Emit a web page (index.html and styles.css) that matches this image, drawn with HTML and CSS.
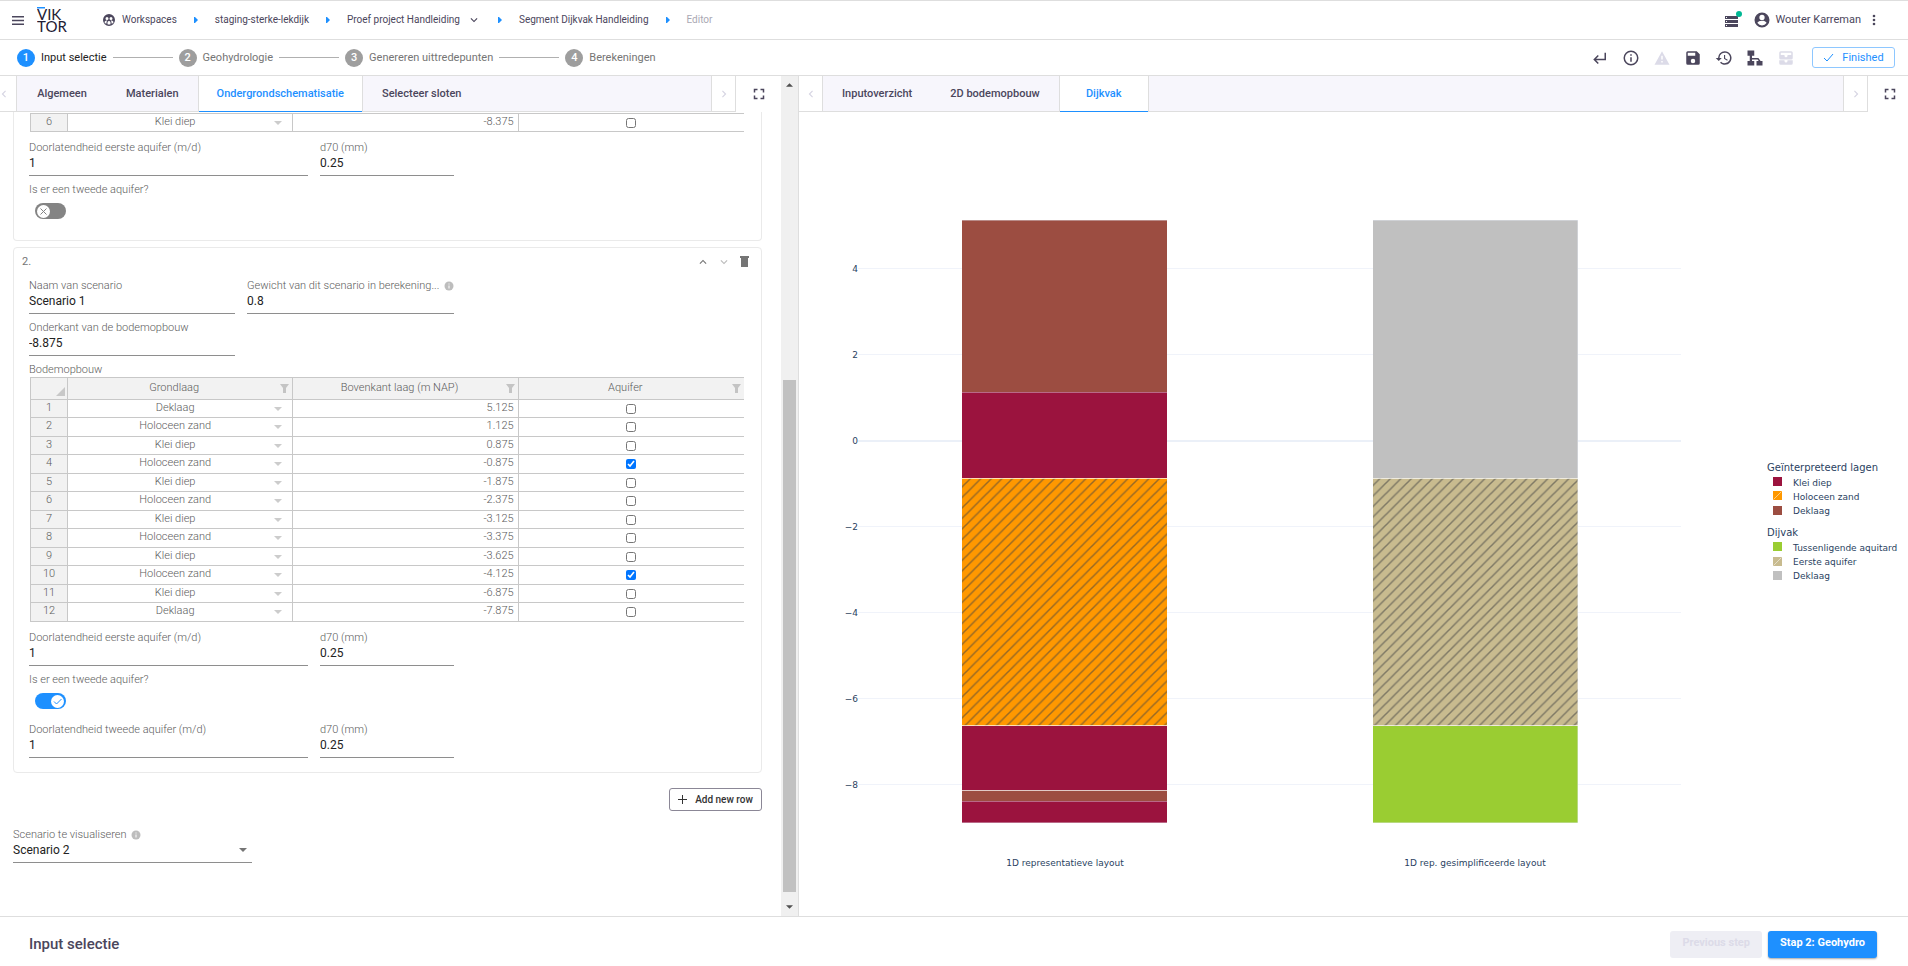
FILE: index.html
```html
<!DOCTYPE html>
<html lang="nl">
<head>
<meta charset="utf-8">
<title>Segment Dijkvak Handleiding - Editor</title>
<link rel="stylesheet" href="styles.css">
</head>
<body>
<svg class="sprite" aria-hidden="true">
  <symbol id="i-caret" viewBox="0 0 8 4"><path d="M0 0h8L4 4z"/></symbol>
  <symbol id="i-filter" viewBox="0 0 9 9"><path d="M0 0h9L6 4v5H3V4z"/></symbol>
  <symbol id="i-info-solid" viewBox="0 0 10 10"><circle cx="5" cy="5" r="4.500"/><path d="M4.500 2.500h1v1h-1zM4.500 4.500h1v3h-1z" fill="#fff"/></symbol>
  <symbol id="i-full" viewBox="0 0 24 24"><path d="M5 5h5v2H7v3H5zm9 0h5v5h-2V7h-3zm3 9h2v5h-5v-2h3zm-7 3v2H5v-5h2v3z"/></symbol>
  <symbol id="i-left" viewBox="0 0 24 24"><path d="M15.4 16.6 10.8 12l4.6-4.6L14 6l-6 6 6 6z"/></symbol>
  <symbol id="i-right" viewBox="0 0 24 24"><path d="M8.6 16.6l4.6-4.6-4.6-4.6L10 6l6 6-6 6z"/></symbol>
  <symbol id="i-down" viewBox="0 0 24 24"><path d="M7.4 8.6 12 13.2l4.6-4.6L18 10l-6 6-6-6z"/></symbol>
  <symbol id="i-up" viewBox="0 0 24 24"><path d="M7.4 15.4 12 10.8l4.6 4.6L18 14l-6-6-6 6z"/></symbol>
  <symbol id="i-step" viewBox="0 0 4 6"><path d="M0 0h1l3 3-3 3H0z"/></symbol>
</svg>

<header class="topbar">
  <button class="icon-btn menu" aria-label="Menu"><svg width="12" height="9" viewBox="0 0 12 9"><path d="M0 0h12v1.500H0zM0 3.800h12v1.500H0zM0 7.500h12V9H0z"/></svg></button>
  <a class="logo" href="#" aria-label="VIKTOR"><svg width="32" height="32" viewBox="0 -3 32 32"><path d="M0 0h8v1.500H0z" fill="#1e90ff"/><text y="13">VIK<tspan x="0" y="25">TOR</tspan></text></svg></a>
  <nav class="crumbs">
    <a href="#"><svg width="12" height="12" viewBox="0 0 24 24"><path fill-rule="evenodd" d="M12 0a12 12 0 1 0 0 24 12 12 0 0 0 0-24zM8 6a3 3 0 1 1 0 6 3 3 0 0 1 0-6zm8 0a3 3 0 1 1 0 6 3 3 0 0 1 0-6zM3 17c0-3 3-4 5-4l1 .2C8 14 7 15 7 17v2c-2 0-3-1-4-2zm9 4c-1 0-2 0-3-.5V17c0-2 2-3 3-3s3 1 3 3v3.500c-1 .5-2 .5-3 .5zm5-2v-2c0-2-1-3-2-3.800l1-.2c2 0 5 1 5 4-1 1-2 2-4 2z"/></svg>Workspaces</a>
    <svg class="sep" width="4" height="6"><use href="#i-step"/></svg>
    <a href="#">staging-sterke-lekdijk</a>
    <svg class="sep" width="4" height="6"><use href="#i-step"/></svg>
    <a href="#">Proef project Handleiding<svg class="drop" width="14" height="14"><use href="#i-down"/></svg></a>
    <svg class="sep" width="4" height="6"><use href="#i-step"/></svg>
    <a href="#">Segment Dijkvak Handleiding</a>
    <svg class="sep" width="4" height="6"><use href="#i-step"/></svg>
    <span class="current">Editor</span>
  </nav>
  <div class="user">
    <button class="icon-btn" aria-label="Jobs"><svg width="18" height="18" viewBox="0 0 18 18"><path d="M1 5h13v3H1zM1 9h13v3H1zM1 13h13v3H1z"/><path d="M2 6h1v1H2zM2 10h1v1H2zM2 14h1v1H2z" fill="#fff"/><circle cx="15" cy="3" r="3" fill="#00b894"/></svg></button>
    <button class="account"><svg width="18" height="18" viewBox="0 0 24 24"><path d="M12 2a10 10 0 1 0 0 20 10 10 0 0 0 0-20zm0 3a3.500 3.500 0 1 1 0 7 3.500 3.500 0 0 1 0-7zm0 14.200a7.200 7.200 0 0 1-6-3.200c0-2 4-3.100 6-3.100s6 1.100 6 3.100a7.200 7.200 0 0 1-6 3.200z" fill-rule="evenodd"/></svg>Wouter Karreman</button>
    <button class="icon-btn" aria-label="Meer"><svg width="4" height="12" viewBox="0 0 4 12"><circle cx="2" cy="2" r="1.300"/><circle cx="2" cy="6" r="1.300"/><circle cx="2" cy="10" r="1.300"/></svg></button>
  </div>
</header>

<div class="stepbar">
  <ol class="steps">
    <li class="active"><b>1</b><span>Input selectie</span></li>
    <li><b>2</b><span>Geohydrologie</span></li>
    <li><b>3</b><span>Genereren uittredepunten</span></li>
    <li><b>4</b><span>Berekeningen</span></li>
  </ol>
  <div class="tools">
    <button class="icon-btn" aria-label="Terug"><svg width="18" height="18" viewBox="0 0 24 24"><path d="M18 5v8H6.800l3.600-3.600L9 8l-6 6 6 6 1.400-1.400L6.800 15H20V5z"/></svg></button>
    <button class="icon-btn" aria-label="Informatie"><svg width="18" height="18" viewBox="0 0 24 24"><path d="M11 9h2V7h-2m1 13a8 8 0 1 1 0-16 8 8 0 0 1 0 16m0-18a10 10 0 1 0 0 20 10 10 0 0 0 0-20m-1 15h2v-6h-2z"/></svg></button>
    <button class="icon-btn" disabled aria-label="Waarschuwingen"><svg width="18" height="18" viewBox="0 0 24 24"><path d="M13 14h-2V9h2m0 9h-2v-2h2M2 21h20L12 3z"/></svg></button>
    <button class="icon-btn" aria-label="Opslaan"><svg width="18" height="18" viewBox="0 0 24 24"><path d="M15 9H5V5h10m-3 14a3 3 0 1 1 0-6 3 3 0 0 1 0 6m5-16H5a2 2 0 0 0-2 2v14a2 2 0 0 0 2 2h14a2 2 0 0 0 2-2V7z"/></svg></button>
    <button class="icon-btn" aria-label="Geschiedenis"><svg width="18" height="18" viewBox="0 0 24 24"><path d="M13.500 8H12v5l4.300 2.500.7-1.200-3.500-2.100zM13 3a9 9 0 0 0-9 9H1l4 4 4-4H6a7 7 0 1 1 2.100 4.900l-1.400 1.500A9 9 0 1 0 13 3"/></svg></button>
    <button class="icon-btn" aria-label="Structuur"><svg width="18" height="18" viewBox="0 0 24 24"><path d="M2 2h9v7H8v3h8.500l3 4H22v6h-8v-6h3l-1.500-2H8v2h3v6H2v-6h3V9H2z"/></svg></button>
    <button class="icon-btn" disabled aria-label="Inbox"><svg width="18" height="18" viewBox="0 0 24 24"><path d="M19 3H5a2 2 0 0 0-2 2v7a2 2 0 0 0 2 2h14a2 2 0 0 0 2-2V5a2 2 0 0 0-2-2zm0 5h-5v1a2 2 0 0 1-4 0V8H5V5h14zM14 15v1a2 2 0 0 1-4 0v-1H3v4a2 2 0 0 0 2 2h14a2 2 0 0 0 2-2v-4z"/></svg></button>
    <button class="finished"><svg width="11" height="9" viewBox="0 0 11 9"><path d="M1 5l3 3 6-7" fill="none" stroke="currentColor"/></svg>Finished</button>
  </div>
</div>

<main class="work">
  <section class="left">
    <div class="editor">
      <div class="tabbar">
        <button class="nav prev" aria-label="Vorige tabs"><svg width="14" height="14"><use href="#i-left"/></svg></button>
        <div class="tabs" role="tablist">
          <button role="tab">Algemeen</button><button role="tab">Materialen</button><button role="tab" class="on" aria-selected="true">Ondergrondschematisatie</button><button role="tab">Selecteer sloten</button>
        </div>
        <button class="nav next" aria-label="Volgende tabs"><svg width="14" height="14"><use href="#i-right"/></svg></button>
        <button class="full" aria-label="Volledig scherm"><svg width="18" height="18"><use href="#i-full"/></svg></button>
      </div>
      <form class="form">
        <div class="card cut">
          <table class="grid">
            <colgroup><col class="c-num"><col><col><col></colgroup>
            <tbody>
            <tr><th>6</th><td><span class="pick"><select aria-label="Grondlaag 6"><option>Klei diep</option></select><svg width="8" height="4"><use href="#i-caret"/></svg></span></td><td class="num">-8.375</td><td class="chk"><input type="checkbox" aria-label="Aquifer 6"></td></tr>
            </tbody>
          </table>
          <div class="row after-grid">
            <div class="field wide"><label for="k1">Doorlatendheid eerste aquifer (m/d)</label><input id="k1" value="1"></div>
            <div class="field small"><label for="d1">d70 (mm)</label><input id="d1" value="0.25"></div>
          </div>
          <div class="toggle-field"><label for="t1">Is er een tweede aquifer?</label>
            <span class="toggle"><input type="checkbox" id="t1"><svg width="13" height="13" viewBox="0 0 13 13"><circle cx="6.500" cy="6.500" r="6.500" fill="#fff"/><path d="M3.500 3.500l6 6m0-6l-6 6"/></svg></span></div>
        </div>

        <div class="card">
          <div class="card-head"><span>2.</span>
            <button type="button" class="icon-btn" aria-label="Omhoog"><svg width="14" height="14"><use href="#i-up"/></svg></button>
            <button type="button" class="icon-btn dim" aria-label="Omlaag"><svg width="14" height="14"><use href="#i-down"/></svg></button>
            <button type="button" class="icon-btn" aria-label="Verwijderen"><svg width="9" height="11" viewBox="0 0 9 11"><path d="M0 0h9v2H0zM1 2h7v9H1z"/></svg></button>
          </div>
          <div class="row">
            <div class="field half"><label for="n2">Naam van scenario</label><input id="n2" value="Scenario 1"></div>
            <div class="field half"><label for="g2"><span>Gewicht van dit scenario in berekening...</span><svg width="10" height="10"><use href="#i-info-solid"/></svg></label><input id="g2" value="0.8"></div>
          </div>
          <div class="row">
            <div class="field half"><label for="o2">Onderkant van de bodemopbouw</label><input id="o2" value="-8.875"></div>
          </div>
          <div class="caption">Bodemopbouw</div>
          <table class="grid">
            <colgroup><col class="c-num"><col><col><col></colgroup>
            <thead><tr><th class="corner"><svg width="9" height="9" viewBox="0 0 9 9"><path d="M9 0v9H0z"/></svg></th>
              <th><span class="head"><span>Grondlaag</span><svg width="9" height="9"><use href="#i-filter"/></svg></span></th>
              <th><span class="head"><span>Bovenkant laag (m NAP)</span><svg width="9" height="9"><use href="#i-filter"/></svg></span></th>
              <th><span class="head"><span>Aquifer</span><svg width="9" height="9"><use href="#i-filter"/></svg></span></th></tr></thead>
            <tbody>
            <tr><th>1</th><td><span class="pick"><select aria-label="Grondlaag 1"><option>Deklaag</option></select><svg width="8" height="4"><use href="#i-caret"/></svg></span></td><td class="num">5.125</td><td class="chk"><input type="checkbox" aria-label="Aquifer 1"></td></tr>
            <tr><th>2</th><td><span class="pick"><select aria-label="Grondlaag 2"><option>Holoceen zand</option></select><svg width="8" height="4"><use href="#i-caret"/></svg></span></td><td class="num">1.125</td><td class="chk"><input type="checkbox" aria-label="Aquifer 2"></td></tr>
            <tr><th>3</th><td><span class="pick"><select aria-label="Grondlaag 3"><option>Klei diep</option></select><svg width="8" height="4"><use href="#i-caret"/></svg></span></td><td class="num">0.875</td><td class="chk"><input type="checkbox" aria-label="Aquifer 3"></td></tr>
            <tr><th>4</th><td><span class="pick"><select aria-label="Grondlaag 4"><option>Holoceen zand</option></select><svg width="8" height="4"><use href="#i-caret"/></svg></span></td><td class="num">-0.875</td><td class="chk"><input type="checkbox" checked aria-label="Aquifer 4"></td></tr>
            <tr><th>5</th><td><span class="pick"><select aria-label="Grondlaag 5"><option>Klei diep</option></select><svg width="8" height="4"><use href="#i-caret"/></svg></span></td><td class="num">-1.875</td><td class="chk"><input type="checkbox" aria-label="Aquifer 5"></td></tr>
            <tr><th>6</th><td><span class="pick"><select aria-label="Grondlaag 6"><option>Holoceen zand</option></select><svg width="8" height="4"><use href="#i-caret"/></svg></span></td><td class="num">-2.375</td><td class="chk"><input type="checkbox" aria-label="Aquifer 6"></td></tr>
            <tr><th>7</th><td><span class="pick"><select aria-label="Grondlaag 7"><option>Klei diep</option></select><svg width="8" height="4"><use href="#i-caret"/></svg></span></td><td class="num">-3.125</td><td class="chk"><input type="checkbox" aria-label="Aquifer 7"></td></tr>
            <tr><th>8</th><td><span class="pick"><select aria-label="Grondlaag 8"><option>Holoceen zand</option></select><svg width="8" height="4"><use href="#i-caret"/></svg></span></td><td class="num">-3.375</td><td class="chk"><input type="checkbox" aria-label="Aquifer 8"></td></tr>
            <tr><th>9</th><td><span class="pick"><select aria-label="Grondlaag 9"><option>Klei diep</option></select><svg width="8" height="4"><use href="#i-caret"/></svg></span></td><td class="num">-3.625</td><td class="chk"><input type="checkbox" aria-label="Aquifer 9"></td></tr>
            <tr><th>10</th><td><span class="pick"><select aria-label="Grondlaag 10"><option>Holoceen zand</option></select><svg width="8" height="4"><use href="#i-caret"/></svg></span></td><td class="num">-4.125</td><td class="chk"><input type="checkbox" checked aria-label="Aquifer 10"></td></tr>
            <tr><th>11</th><td><span class="pick"><select aria-label="Grondlaag 11"><option>Klei diep</option></select><svg width="8" height="4"><use href="#i-caret"/></svg></span></td><td class="num">-6.875</td><td class="chk"><input type="checkbox" aria-label="Aquifer 11"></td></tr>
            <tr><th>12</th><td><span class="pick"><select aria-label="Grondlaag 12"><option>Deklaag</option></select><svg width="8" height="4"><use href="#i-caret"/></svg></span></td><td class="num">-7.875</td><td class="chk"><input type="checkbox" aria-label="Aquifer 12"></td></tr>
            </tbody>
          </table>
          <div class="row after-grid">
            <div class="field wide"><label for="k2">Doorlatendheid eerste aquifer (m/d)</label><input id="k2" value="1"></div>
            <div class="field small"><label for="d2">d70 (mm)</label><input id="d2" value="0.25"></div>
          </div>
          <div class="toggle-field"><label for="t2">Is er een tweede aquifer?</label>
            <span class="toggle on"><input type="checkbox" id="t2" checked><svg width="13" height="13" viewBox="0 0 13 13"><circle cx="6.500" cy="6.500" r="6.500" fill="#fff"/><path d="M3 6.500l2.500 2.500 5-5"/></svg></span></div>
          <div class="row">
            <div class="field wide"><label for="k3">Doorlatendheid tweede aquifer (m/d)</label><input id="k3" value="1"></div>
            <div class="field small"><label for="d3">d70 (mm)</label><input id="d3" value="0.25"></div>
          </div>
        </div>

        <button type="button" class="add"><svg width="9" height="9" viewBox="0 0 9 9"><path d="M4 0h1v4h4v1H5v4H4V5H0V4h4z"/></svg>Add new row</button>

        <div class="field scenario"><label for="sv"><span>Scenario te visualiseren</span><svg width="10" height="10"><use href="#i-info-solid"/></svg></label>
          <span class="pick"><select id="sv"><option>Scenario 2</option></select><svg width="8" height="4"><use href="#i-caret"/></svg></span></div>
      </form>
    </div>
    <div class="scroll" aria-hidden="true">
      <svg width="7" height="4" viewBox="0 0 8 4"><path d="M0 4h8L4 0z"/></svg>
      <div class="track"><div class="thumb"></div></div>
      <svg width="7" height="4"><use href="#i-caret"/></svg>
    </div>
  </section>

  <section class="right">
    <div class="tabbar">
      <button class="nav prev" aria-label="Vorige tabs"><svg width="14" height="14"><use href="#i-left"/></svg></button>
      <div class="tabs" role="tablist">
        <button role="tab">Inputoverzicht</button><button role="tab">2D bodemopbouw</button><button role="tab" class="on" aria-selected="true">Dijkvak</button>
      </div>
      <button class="nav next" aria-label="Volgende tabs"><svg width="14" height="14"><use href="#i-right"/></svg></button>
      <button class="full" aria-label="Volledig scherm"><svg width="18" height="18"><use href="#i-full"/></svg></button>
    </div>
    <div class="plot">
      <svg viewBox="799 112 1109 804" role="img" aria-label="Bodemlagen">
        <defs>
          <pattern id="hatch" width="10.500" height="10.500" patternUnits="userSpaceOnUse"><path d="M-2 2l4-4M-1 11.500l12.500-12.500M8.500 12.500l4-4" stroke="#444" stroke-opacity=".55" stroke-width="1.500"/></pattern>
        </defs>
        <path class="gridline" d="M858 268.500h823M858 354.500h823M858 526.500h823M858 612.500h823M858 698.500h823M858 784.500h823"/>
        <path class="zeroline" d="M858 441h823"/>
        <g class="bars">
          <rect x="962" y="220" width="205" height="172" fill="#9c4d41"/>
          <rect x="962" y="392" width="205" height="86" fill="#9b133e"/>
          <rect x="962" y="478" width="205" height="248" fill="#ff9800"/>
          <rect x="962" y="478" width="205" height="248" fill="url(#hatch)"/>
          <rect x="962" y="726" width="205" height="64" fill="#9b133e"/>
          <rect x="962" y="790" width="205" height="11" fill="#9c4d41"/>
          <rect x="962" y="801" width="205" height="22" fill="#9b133e"/>
          <rect x="1373" y="220" width="205" height="258" fill="#c0c0c0"/>
          <rect x="1373" y="478" width="205" height="248" fill="#c8bb8f"/>
          <rect x="1373" y="478" width="205" height="248" fill="url(#hatch)"/>
          <rect x="1373" y="726" width="205" height="97" fill="#9acd32"/>
          <path d="M962 220.500h205M962 392.500h205M962 801.500h205M962 822.500h205M1373 220.500h205M1373 822.500h205M1577.500 220v603" stroke="#e5ecf6" stroke-opacity=".4"/>
          <path d="M962 478.500h205M962 725.500h205M962 790.500h205M1373 478.500h205M1373 725.500h205" stroke="#fff" stroke-opacity=".7"/>
        </g>
        <g class="ticks">
          <text x="858" y="272">4</text><text x="858" y="358">2</text><text x="858" y="444">0</text><text x="858" y="530">−2</text><text x="858" y="616">−4</text><text x="858" y="702">−6</text><text x="858" y="788">−8</text>
        </g>
        <g class="cats"><text x="1065" y="866">1D representatieve layout</text><text x="1475" y="866">1D rep. gesimplificeerde layout</text></g>
        <g class="legend">
          <text class="group" x="1767" y="471">Geïnterpreteerd lagen</text>
          <rect x="1773" y="477" width="9" height="9" fill="#9b133e"/><text x="1793" y="486">Klei diep</text>
          <rect x="1773" y="491" width="9" height="9" fill="#ff9800"/><path d="M1773.500 499.500l8-8" stroke="#fff" stroke-opacity=".5"/><text x="1793" y="500">Holoceen zand</text>
          <rect x="1773" y="506" width="9" height="9" fill="#9c4d41"/><text x="1793" y="514">Deklaag</text>
          <text class="group" x="1767" y="536">Dijvak</text>
          <rect x="1773" y="542" width="9" height="9" fill="#9acd32"/><text x="1793" y="551">Tussenligende aquitard</text>
          <rect x="1773" y="557" width="9" height="9" fill="#c8bb8f"/><path d="M1773.500 565.500l8-8" stroke="#fff" stroke-opacity=".5"/><text x="1793" y="565">Eerste aquifer</text>
          <rect x="1773" y="571" width="9" height="9" fill="#c0c0c0"/><text x="1793" y="579">Deklaag</text>
        </g>
      </svg>
    </div>
  </section>
</main>

<footer class="footer">
  <h1>Input selectie</h1>
  <button class="step-btn" disabled>Previous step</button>
  <button class="step-btn primary">Stap 2: Geohydro</button>
</footer>
</body>
</html>
```
FILE: styles.css
```css
:root {
  --ink: #4b465c;
  --blue: #1e90ff;
  --line: #dedede;
  --cell: #c8c8c8;
  --muted: #757575;
}
* { box-sizing: border-box; }
body {
  margin: 0;
  height: 100vh;
  display: flex;
  flex-direction: column;
  overflow: hidden;
  border-top: 1px solid var(--line);
  background: #fff;
  color: var(--ink);
  font: 11px/14px Roboto, sans-serif;
}
button, input, select { font: inherit; color: inherit; margin: 0; padding: 0; border: 0; background: none; }
a { color: inherit; text-decoration: none; }
svg { display: block; fill: currentColor; flex: none; }
.sprite { position: absolute; width: 0; height: 0; }
.icon-btn { display: flex; }
.icon-btn:disabled { color: #dcdbe8; }

.topbar { flex: none; height: 39px; display: flex; align-items: center; padding: 0 32px 0 12px; border-bottom: 1px solid var(--line); }
.logo { margin-left: 13px; color: #222033; }
.logo text { font: 15px Lato, sans-serif; }
.crumbs { flex: 1; display: flex; align-items: center; margin-left: 34px; gap: 17px; font-size: 10px; }
.crumbs a { display: flex; align-items: center; gap: 7px; }
.crumbs .sep { color: var(--blue); }
.crumbs .current { color: #aaa8b3; }
.user { display: flex; align-items: center; gap: 11px; }
.account { display: flex; align-items: center; gap: 4px; }

.stepbar { flex: none; height: 36px; display: flex; align-items: center; justify-content: space-between; padding: 0 13px 0 17px; border-bottom: 1px solid var(--line); }
.steps { display: flex; align-items: center; margin: 0; padding: 0; list-style: none; color: var(--muted); }
.steps li { display: flex; align-items: center; gap: 6px; }
.steps li + li::before { content: ""; width: 60px; height: 1px; margin-left: 6px; background: #b0b0b0; }
.steps b { width: 18px; height: 18px; border-radius: 50%; background: #9e9e9e; color: #fff; font-weight: 500; line-height: 18px; text-align: center; }
.steps .active { color: #222; }
.steps .active b { background: var(--blue); }
.tools { display: flex; align-items: center; gap: 13px; }
.finished { display: flex; align-items: center; justify-content: center; gap: 8px; width: 83px; height: 21px; margin-left: 4px; border: 1px solid #8ec7ff; border-radius: 3px; color: var(--blue); }

.work { flex: 1; min-height: 0; display: grid; grid-template-columns: 799fr 1109fr; }
.left { display: flex; min-width: 0; min-height: 0; border-right: 1px solid var(--line); }
.editor { flex: 1; min-width: 0; display: flex; flex-direction: column; }
.right { display: flex; flex-direction: column; min-width: 0; min-height: 0; }

.tabbar { flex: none; display: flex; height: 36px; }
.tabs { flex: 1; min-width: 0; display: flex; background: #f7f6fc; border-bottom: 1px solid var(--line); }
.tabs button { min-width: 90px; height: 36px; padding: 0 19px; font-weight: 500; white-space: nowrap; }
.tabs .on { padding: 0 18px; background: #fff; color: var(--blue); border: 1px solid var(--line); border-width: 0 1px; box-shadow: inset 0 -1px var(--blue); }
.nav { display: flex; align-items: center; justify-content: center; width: 25px; border: 1px solid var(--line); border-width: 0 1px 1px 0; color: #d6d4e2; }
.nav.prev { width: 24px; }
.left .nav.prev { width: 17px; padding-right: 8px; }
.nav.next { border-left-width: 1px; }
.full { display: flex; align-items: center; justify-content: center; width: 45px; }
.right .full { width: 40px; padding-left: 4px; }

.form { flex: 1; min-height: 0; overflow: hidden; padding: 0 19px 0 13px; }
.card { border: 1px solid #eaeaea; border-radius: 4px; padding: 0 17px 14px 15px; margin-bottom: 6px; }
.card.cut { border-top: 0; border-radius: 0 0 4px 4px; padding-top: 1px; padding-bottom: 7px; }
.card-head { display: flex; align-items: center; gap: 7px; height: 31px; padding-bottom: 4px; margin: 0 -5px 0 -7px; color: var(--muted); }
.card-head span { flex: 1; }
.card-head .icon-btn:last-child { margin-left: 2px; }
.card-head .dim { color: #bbb; }
.row { display: grid; grid-template-columns: 206px 12px 61px 12px 134px; margin-bottom: 7px; }
.row:last-child { margin-bottom: 0; }
.field.half { grid-column: 1; }
.field.half + .half { grid-column: 3 / 6; }
.field.wide { grid-column: 1 / 4; }
.field.small { grid-column: 5; }
.field label { display: flex; align-items: center; justify-content: space-between; gap: 4px; color: var(--muted); white-space: nowrap; }
.field label, .caption, .toggle-field label, .grid { font-weight: 300; color: #5c5c5c; }
.field label svg { color: #bdbdbd; }
.field input, .scenario .pick { width: 100%; height: 21px; padding-bottom: 4px; border-bottom: 1px solid #8e8e8e; color: #222; font-size: 12px; }
.field input { display: block; }
.after-grid { margin-top: 9px; }
.toggle-field { height: 50px; }
.toggle-field label { display: block; }
.toggle { display: grid; width: 31px; margin: 6px 0 0 6px; }
.toggle input { grid-area: 1 / 1; appearance: none; height: 16px; border-radius: 8px; background: #848484; }
.toggle.on input { background: var(--blue); }
.toggle svg { grid-area: 1 / 1; align-self: center; justify-self: start; margin: 0 2px; pointer-events: none; }
.toggle path { fill: none; stroke: #848484; }
.toggle.on svg { justify-self: end; }
.toggle.on path { stroke: var(--blue); }

.grid { width: calc(100% - 1px); margin-left: 1px; table-layout: fixed; border-collapse: separate; border-spacing: 0; border-top: 1px solid var(--cell); border-left: 1px solid var(--cell); }
.grid .c-num { width: 37px; }
.grid th, .grid td { height: 18px; padding: 0; border: 0 solid var(--cell); border-width: 0 1px 1px 0; line-height: 14px; font-weight: inherit; text-align: center; vertical-align: middle; }
.grid tr > :last-child { border-right: 0; }
.grid tbody tr:nth-child(even) > * { height: 19px; }
.grid th { background: #f2f2f2; }
.grid tbody th, .grid .num { padding-bottom: 2px; }
.grid thead th { height: 22px; }
.grid .corner { vertical-align: bottom; }
.corner svg { margin: 0 2px 3px auto; color: var(--cell); }
.head { display: flex; align-items: center; padding-right: 3px; }
.head span { flex: 1; padding-bottom: 2px; }
.head svg { color: #c4c4c4; }
.pick { display: grid; align-items: center; }
.pick select { grid-area: 1 / 1; width: 100%; height: 16px; line-height: 14px; appearance: none; }
.pick svg { grid-area: 1 / 1; justify-self: end; pointer-events: none; }
.grid .pick select { padding: 0 10px 2px 0; text-align: center; text-align-last: center; }
.grid .pick svg { margin-right: 10px; color: #ccc; }
.grid .num { padding-right: 4px; text-align: right; }
.chk input { display: block; width: 10px; height: 10px; margin: 0 auto; accent-color: #0075ff; }

.add { display: flex; align-items: center; justify-content: center; gap: 8px; width: 93px; height: 23px; margin: 15px 0 17px auto; border: 1px solid #8b8796; border-radius: 3px; color: #333; font-size: 10px; font-weight: 500; }
.scenario { width: 239px; }
.scenario label { justify-content: flex-start; }
.scenario .pick svg { margin-right: 5px; color: #757575; }

.scroll { flex: none; width: 17px; display: flex; flex-direction: column; align-items: center; justify-content: space-between; padding: 7px 0; background: #f0f0f0; color: #505050; }
.track { flex: 1; width: 13px; padding-top: 293px; margin: 0 0 13px; display: flex; }
.thumb { flex: 1; background: #c1c1c1; }

.plot { flex: 1; min-height: 0; }
.plot > svg { width: 100%; height: 100%; }
.plot text { font: 9px "DejaVu Sans", Verdana, sans-serif; fill: #2a3f5f; }
.gridline { stroke: #f0f3fa; }
.zeroline { stroke: #ebf0f8; stroke-width: 2; }
.ticks text { text-anchor: end; }
.cats text { text-anchor: middle; }
.plot .legend .group { font-size: 10px; }

.footer { flex: none; height: 50px; display: flex; align-items: center; gap: 6px; padding: 5px 31px 0 29px; border-top: 1px solid var(--line); }
.footer h1 { flex: 1; margin: 0; font-size: 15px; font-weight: 500; }
.step-btn { height: 27px; padding: 0 12px 2px; border-radius: 3px; background: #eeeef4; color: #dcdbe8; font-weight: 700; }
.step-btn.primary { background: var(--blue); color: #fff; box-shadow: 0 1px 2px rgba(0, 0, 0, .35); }
```
